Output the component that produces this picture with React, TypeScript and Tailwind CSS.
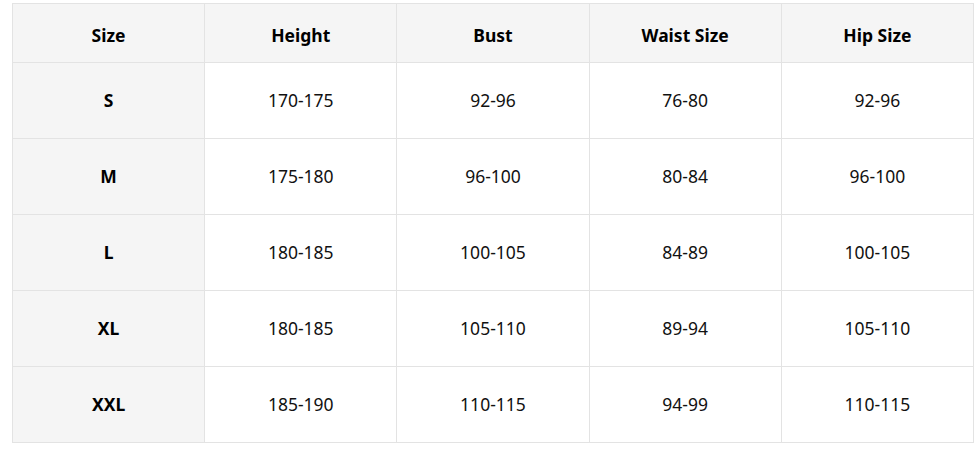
const headers = ["Size", "Height", "Bust", "Waist Size", "Hip Size"];

const rows = [
  ["S", "170-175", "92-96", "76-80", "92-96"],
  ["M", "175-180", "96-100", "80-84", "96-100"],
  ["L", "180-185", "100-105", "84-89", "100-105"],
  ["XL", "180-185", "105-110", "89-94", "105-110"],
  ["XXL", "185-190", "110-115", "94-99", "110-115"],
];

export default function App() {
  return (
    <div
      className="bg-white w-[977px] h-[453px] pl-[12px] pt-[3px]"
      style={{ fontFamily: '"Noto Sans", "Open Sans", sans-serif' }}
    >
      <table className="w-[962px] table-fixed border-collapse text-[17.5px] text-[#111]">
        <thead>
          <tr className="h-[59px] bg-[#f5f5f5]">
            {headers.map((h) => (
              <th
                key={h}
                className="border border-[#e3e3e3] pt-[4px] text-center font-bold text-black"
              >
                {h}
              </th>
            ))}
          </tr>
        </thead>
        <tbody>
          {rows.map((row) => (
            <tr key={row[0]} className="h-[76px]">
              {row.map((cell, i) => (
                <td
                  key={i}
                  className={`border border-[#e3e3e3] text-center ${
                    i === 0 ? "bg-[#f5f5f5] font-bold text-black" : "bg-white"
                  }`}
                >
                  {cell}
                </td>
              ))}
            </tr>
          ))}
        </tbody>
      </table>
    </div>
  );
}
